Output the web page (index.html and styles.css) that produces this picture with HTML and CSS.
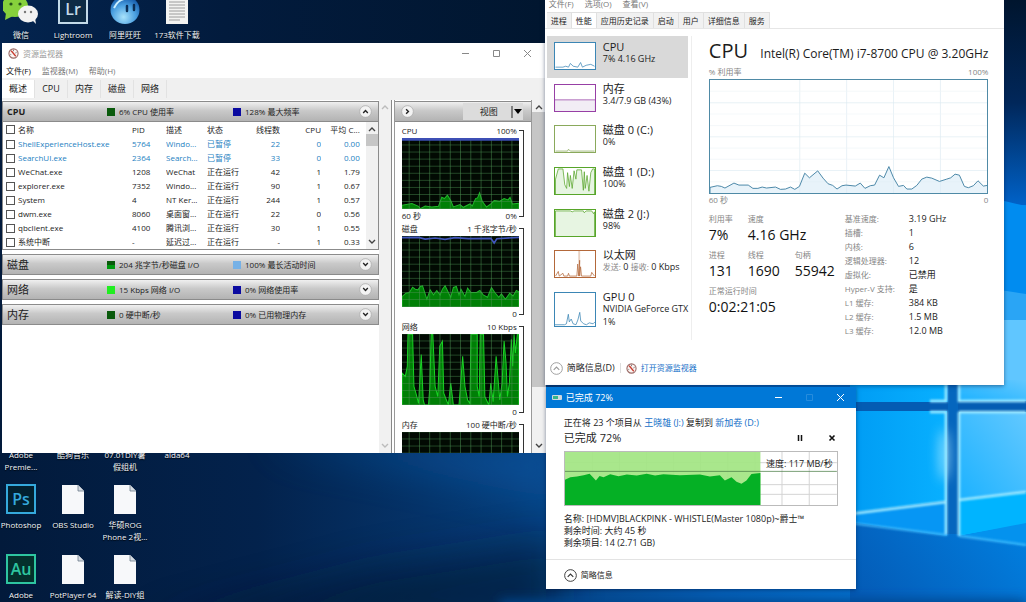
FILE: index.html
```html
<!DOCTYPE html>
<html lang="zh-CN">
<head>
<meta charset="utf-8">
<title>桌面</title>
<link rel="stylesheet" href="styles.css">
</head>
<body>
<main class="desktop">
<svg class="wallpaper" viewBox="0 0 1026 602" preserveAspectRatio="none" aria-hidden="true">
  <defs>
    <linearGradient id="night" x1="0" y1="0" x2="1" y2="0"><stop offset="0" stop-color="#021a3b"/><stop offset=".25" stop-color="#03224c"/><stop offset=".5" stop-color="#063c78"/><stop offset=".7" stop-color="#0560b8"/><stop offset="1" stop-color="#0287ee"/></linearGradient>
    <linearGradient id="sky" x1="0" y1="0" x2="0" y2="1"><stop offset="0" stop-color="#00152e"/><stop offset=".5" stop-color="#01275a"/><stop offset="1" stop-color="#0062c8"/></linearGradient>
    <linearGradient id="pane" x1="0" y1="0" x2="1" y2="0"><stop offset="0" stop-color="#009cf4"/><stop offset="1" stop-color="#08b0ff"/></linearGradient>
    <linearGradient id="pane2" x1="0" y1="1" x2="1" y2="0"><stop offset="0" stop-color="#1cb2ff"/><stop offset="1" stop-color="#62c8ff"/></linearGradient>
    <linearGradient id="floor" x1="0" y1="1" x2="1" y2="0"><stop offset="0" stop-color="#0459b4"/><stop offset="1" stop-color="#0092f5"/></linearGradient>
    <linearGradient id="top" x1="0" y1="0" x2="1" y2="0"><stop offset="0" stop-color="#03244f"/><stop offset=".4" stop-color="#021b3d"/><stop offset="1" stop-color="#01162f"/></linearGradient>
    <filter id="soft" filterUnits="userSpaceOnUse" x="840" y="370" width="200" height="240"><feGaussianBlur stdDeviation=".8"/></filter>
    <filter id="glow" filterUnits="userSpaceOnUse" x="0" y="300" width="1026" height="400"><feGaussianBlur stdDeviation="6"/></filter>
    <filter id="haze" filterUnits="userSpaceOnUse" x="0" y="300" width="1026" height="400"><feGaussianBlur stdDeviation="20"/></filter>
  </defs>
  <rect width="1026" height="602" fill="url(#night)"/>
  <rect width="560" height="50" fill="url(#top)"/>
  <path d="M140 630L370 570L560 540V630Z" fill="#01132d" opacity=".6" filter="url(#haze)"/>
  <path d="M260 440H560V500Z" fill="#0a62b4" opacity=".45" filter="url(#haze)"/>
  <rect x="1000" width="26" height="205" fill="url(#sky)"/>
  <path d="M1000 200L1026 206V300L1000 292Z" fill="#008cf0"/>
  <path d="M1000 290L1026 294V325H1000Z" fill="#2aa5f5"/>
  <path d="M1000 320H1026V386H1000Z" fill="#60c6ff"/>
  <rect x="850" y="380" width="176" height="222" fill="url(#floor)"/>
  <path d="M500 600H1026V620H500Z" fill="#03448c" filter="url(#glow)"/>
  <path d="M850 380H947V402H850Z" fill="url(#pane)"/>
  <path d="M850 411H947V501L850 513Z" fill="url(#pane)"/>
  <path d="M850 513L947 501V536L850 522Z" fill="#0696f4"/>
  <path d="M959 380H1026V401H959Z" fill="url(#pane2)"/>
  <path d="M959 412H1026V492L959 500Z" fill="url(#pane2)"/>
  <path d="M959 500L1026 492V524L959 536Z" fill="#00b4ff"/>
  <path d="M959 536L1026 523V546Z" fill="#0492ee"/>
  <path d="M850 402H947L954 401H1026V412H959V534H947V411H850Z" fill="#045cb3"/>
  <rect x="948" y="380" width="10" height="154" fill="#0566be"/>
  <ellipse cx="944" cy="455" rx="5" ry="26" fill="#b5ecff" opacity=".7" filter="url(#glow)"/>
  <g fill="none" stroke="#a4ecff" stroke-width="2.500" filter="url(#soft)">
    <path d="M946 380V401H930M946 535V412H930M959 380V401H1026M959 412V536M959 412H1026"/>
    <path d="M850 514L946 502M959 500L1026 492"/>
    <path d="M850 523L947 535M959 536L1026 545" stroke="#3fb9fa" stroke-width="2"/>
  </g>
</svg>

<svg class="defs" aria-hidden="true">
  <defs>
    <pattern id="grid" width="31" height="21" patternUnits="userSpaceOnUse" x="42" y="293"><path d="M31 0V21M0 21H31" stroke="#4a8f50" stroke-width="3" fill="none"/></pattern>
    <symbol id="gauge" viewBox="0 0 12 12"><circle cx="6" cy="6" r="5" fill="#fbf4f2" stroke="#9a6a66" stroke-width="1.200"/><path d="M3.500 3L8.500 9" stroke="#c7392c" stroke-width="1.400"/><path d="M6 2V3.500M9.500 4.500L8 5.500M2.500 7H3.500" stroke="#555" stroke-width=".8"/></symbol>
    <symbol id="page" viewBox="0 0 22 29"><path d="M0 0H16L22 6V29H0Z" fill="#f7f8fa"/><path d="M16 0V6H22" fill="#d5dbe2" stroke="#6c7b8c" stroke-width=".8"/></symbol>
    <symbol id="up" viewBox="0 0 14 14"><circle cx="7" cy="7" r="6.300" fill="none" stroke="currentColor"/><path d="M4 8.500L7 5.500L10 8.500" fill="none" stroke="currentColor" stroke-width="1.200"/></symbol>
    <symbol id="rup" viewBox="0 0 14 14"><circle cx="7" cy="7" r="6.300" fill="#f3f3f3" stroke="#aaa" stroke-width=".8"/><path d="M4.500 8.500L7 6L9.500 8.500" fill="none" stroke="#222" stroke-width="1.500"/></symbol>
    <symbol id="chev" viewBox="0 0 8 6"><path d="M1 5L4 2L7 5" fill="none" stroke="#444" stroke-width="1.400"/></symbol>
  </defs>
</svg>

<section class="icons" aria-label="桌面图标">
  <a class="icon r1 c1" href="#"><svg class="pic wide" viewBox="0 0 36 30"><ellipse cx="12" cy="12" rx="13" ry="11" fill="#86d13c"/><path d="M3 19L2 26L10 22Z" fill="#86d13c"/><circle cx="8" cy="10" r="1.600" fill="#26541a"/><circle cx="17" cy="10" r="1.600" fill="#26541a"/><ellipse cx="25" cy="20" rx="10" ry="8.500" fill="#f2f2f2"/><path d="M29 26L33 30L32 24Z" fill="#f2f2f2"/><circle cx="22" cy="18" r="1.200" fill="#777"/><circle cx="28" cy="18" r="1.200" fill="#777"/></svg><span>微信</span></a>
  <a class="icon r1 c2" href="#"><span class="pic tile lr">Lr</span><span>Lightroom</span></a>
  <a class="icon r1 c3" href="#"><svg class="pic" viewBox="0 0 30 30"><defs><radialGradient id="ball" cx=".45" cy=".75" r=".7"><stop offset="0" stop-color="#a8e2fb"/><stop offset=".6" stop-color="#4a9fe0"/><stop offset="1" stop-color="#195fae"/></radialGradient></defs><ellipse cx="15" cy="16" rx="14.500" ry="14" fill="url(#ball)"/><path d="M17 12V17M24 11V16" stroke="#0b2d55" stroke-width="2.500" stroke-linecap="round"/><path d="M4 14Q8 6 14 5" stroke="#c9eeff" stroke-width="2" fill="none"/></svg><span>阿里旺旺</span></a>
  <a class="icon r1 c4" href="#"><svg class="pic doc" viewBox="0 0 22 29"><path d="M0 0H22V29H0Z" fill="#f3f3f1"/><path d="M3 7H19M3 10H19M3 13H19M3 16H19M3 19H19M3 22H19M3 25H14" stroke="#9c9c9c"/></svg><span>173软件下载</span></a>
  <a class="icon r2 c1" href="#"><span class="pic"></span><span>Adobe<br>Premie...</span></a>
  <a class="icon r2 c2" href="#"><span class="pic"></span><span>酷狗音乐</span></a>
  <a class="icon r2 c3" href="#"><span class="pic"></span><span>07.01DIY暑<br>假组机</span></a>
  <a class="icon r2 c4" href="#"><span class="pic"></span><span>aida64</span></a>
  <a class="icon r3 c1" href="#"><span class="pic tile ps">Ps</span><span>Photoshop</span></a>
  <a class="icon r3 c2" href="#"><svg class="pic doc"><use href="#page"/></svg><span>OBS Studio</span></a>
  <a class="icon r3 c3" href="#"><svg class="pic doc"><use href="#page"/></svg><span>华硕ROG<br>Phone 2视...</span></a>
  <a class="icon r4 c1" href="#"><span class="pic tile au">Au</span><span>Adobe</span></a>
  <a class="icon r4 c2" href="#"><svg class="pic doc"><use href="#page"/></svg><span>PotPlayer 64</span></a>
  <a class="icon r4 c3" href="#"><svg class="pic doc"><use href="#page"/></svg><span>解读-DIY组</span></a>
</section>

<section class="win resmon" aria-label="资源监视器">
  <header class="titlebar">
    <svg class="gauge"><use href="#gauge"/></svg><h1>资源监视器</h1>
    <div class="winbtns">
      <button aria-label="最小化"><svg viewBox="0 0 9 9"><path d="M1 4.500H8"/></svg></button>
      <button aria-label="最大化"><svg viewBox="0 0 9 9"><path d="M1.500 1.500H7.500V7.500H1.500Z"/></svg></button>
      <button aria-label="关闭"><svg viewBox="0 0 9 9"><path d="M1 1L8 8M8 1L1 8"/></svg></button>
    </div>
  </header>
  <nav class="menubar"><button class="on">文件(F)</button><button>监视器(M)</button><button>帮助(H)</button></nav>
  <nav class="rtabs"><button class="on">概述</button><button>CPU</button><button>内存</button><button>磁盘</button><button>网络</button></nav>
  <div class="rbody">
    <div class="sections">
      <section class="group">
        <header class="bar"><h2 class="bold">CPU</h2><span class="m1"><i class="sq dg"></i>6% CPU 使用率</span><span class="m2"><i class="sq db"></i>128% 最大频率</span><button class="round" aria-label="收起"><svg><use href="#rup"/></svg></button></header>
        <div class="tablebox">
          <table>
            <colgroup><col class="k0"><col class="k1"><col class="k2"><col class="k3"><col class="k4"><col class="k5"><col class="k6"></colgroup>
            <thead><tr><th><label><input type="checkbox">名称</label></th><th>PID</th><th>描述</th><th>状态</th><th class="n">线程数</th><th class="n">CPU</th><th class="n">平均 C...</th></tr></thead>
            <tbody>
            <tr class="paused"><td><label><input type="checkbox">ShellExperienceHost.exe</label></td><td>5764</td><td>Windo...</td><td>已暂停</td><td class="n">22</td><td class="n">0</td><td class="n">0.00</td></tr>
            <tr class="paused"><td><label><input type="checkbox">SearchUI.exe</label></td><td>2364</td><td>Search...</td><td>已暂停</td><td class="n">33</td><td class="n">0</td><td class="n">0.00</td></tr>
            <tr><td><label><input type="checkbox">WeChat.exe</label></td><td>1208</td><td>WeChat</td><td>正在运行</td><td class="n">42</td><td class="n">1</td><td class="n">1.79</td></tr>
            <tr><td><label><input type="checkbox">explorer.exe</label></td><td>7352</td><td>Windo...</td><td>正在运行</td><td class="n">90</td><td class="n">1</td><td class="n">0.67</td></tr>
            <tr><td><label><input type="checkbox">System</label></td><td>4</td><td>NT Ker...</td><td>正在运行</td><td class="n">244</td><td class="n">1</td><td class="n">0.57</td></tr>
            <tr><td><label><input type="checkbox">dwm.exe</label></td><td>8060</td><td>桌面窗...</td><td>正在运行</td><td class="n">22</td><td class="n">0</td><td class="n">0.56</td></tr>
            <tr><td><label><input type="checkbox">qbclient.exe</label></td><td>4100</td><td>腾讯浏...</td><td>正在运行</td><td class="n">30</td><td class="n">1</td><td class="n">0.55</td></tr>
            <tr><td><label><input type="checkbox">系统中断</label></td><td>-</td><td>延迟过...</td><td>正在运行</td><td class="n">-</td><td class="n">1</td><td class="n">0.33</td></tr>
            </tbody>
          </table>
          <div class="scroll inner"><svg><use href="#chev"/></svg><i class="thumb"></i><svg class="down"><use href="#chev"/></svg></div>
        </div>
      </section>
      <header class="bar"><h2>磁盘</h2><span class="m1"><i class="sq dg2"></i>204 兆字节/秒磁盘 I/O</span><span class="m2"><i class="sq lb"></i>100% 最长活动时间</span><button class="round" aria-label="展开"><svg class="down"><use href="#rup"/></svg></button></header>
      <header class="bar"><h2>网络</h2><span class="m1"><i class="sq lg"></i>15 Kbps 网络 I/O</span><span class="m2"><i class="sq db"></i>0% 网络使用率</span><button class="round" aria-label="展开"><svg class="down"><use href="#rup"/></svg></button></header>
      <header class="bar"><h2>内存</h2><span class="m1"><i class="sq dg"></i>0 硬中断/秒</span><span class="m2"><i class="sq db"></i>0% 已用物理内存</span><button class="round" aria-label="展开"><svg class="down"><use href="#rup"/></svg></button></header>
    </div>
    <div class="scroll idle"><svg><use href="#chev"/></svg><svg class="down"><use href="#chev"/></svg></div>
    <aside class="graphs">
      <header class="bar"><button class="round" aria-label="隐藏"><svg class="side"><use href="#rup"/></svg></button><button class="view"><span>视图</span><svg viewBox="0 0 12 12"><path d="M1 0V12" stroke="#222"/><path d="M3 3H11L7 8Z" fill="#000"/></svg></button></header>
      <figure><div class="cap"><span>CPU</span><span>100%</span></div>
        <svg class="plot" viewBox="50 292 353 211" preserveAspectRatio="none"><rect x="50" y="292" width="353" height="211" fill="#020a03"/><path fill="#007f06" stroke="#21b62b" stroke-width="3" d="M50 505V492L80 487L100 495L105 502L120 494L140 497L160 495L170 468L178 472L187 462L197 478L205 497L225 490L235 498L255 488L262 494L272 472L278 470L284 455L292 480L305 497L318 488L328 478L345 480L358 472L370 476L376 468L383 488L403 486V505Z"/><rect x="50" y="292" width="353" height="211" fill="url(#grid)"/><path d="M50 296H403" stroke="#3d4fb5" stroke-width="8"/></svg>
        <div class="cap foot"><span>60 秒</span><span>0%</span></div></figure>
      <figure><div class="cap"><span>磁盘</span><span>1 千兆字节/秒</span></div>
        <svg class="plot" viewBox="50 292 353 211" preserveAspectRatio="none"><rect x="50" y="292" width="353" height="211" fill="#020a03"/><path transform="translate(0 302)" fill="#007f06" stroke="#21b62b" stroke-width="3" d="M50 203V170L62 160L72 158L82 142L90 148L98 150L105 140L112 138L125 178L135 150L145 165L155 152L165 165L172 148L180 138L190 158L197 172L205 143L214 140L222 165L228 148L240 170L248 145L258 158L275 158L285 152L295 165L308 172L320 143L330 158L342 172L350 162L362 178L375 160L385 168L395 152L403 156V203Z"/><rect x="50" y="292" width="353" height="211" fill="url(#grid)"/><path d="M50 297L100 296L120 301L150 298L180 302L210 297L250 300L318 299L328 313L336 300L403 296" fill="none" stroke="#4257bd" stroke-width="5"/></svg>
        <div class="cap foot"><span></span><span>0</span></div></figure>
      <figure><div class="cap"><span>网络</span><span>10 Kbps</span></div>
        <svg class="plot" viewBox="50 292 353 211" preserveAspectRatio="none"><rect x="50" y="292" width="353" height="211" fill="#020a03"/><path transform="translate(0 8)" fill="#007f06" stroke="#18d524" stroke-width="3" d="M50 500V400L60 410L66 380L68 285H82L86 440L92 460L100 490L108 345L114 480L118 495H130L134 440L138 285H143L150 440L158 470L164 320L172 305L176 460L184 480L190 495L197 430L205 495H222L233 350L240 440L248 480L255 490L258 285H277V440L283 470L286 285H296L300 470L312 495L318 430L325 485L334 350L340 420L345 480L352 430L358 305L364 370L368 470L374 430L380 300L384 380L388 285L392 340L398 285H403V500Z"/><rect x="50" y="292" width="353" height="211" fill="url(#grid)"/></svg>
        <div class="cap foot"><span></span><span>0</span></div></figure>
      <figure><div class="cap"><span>内存</span><span>100 硬中断/秒</span></div>
        <svg class="plot" viewBox="50 292 353 211" preserveAspectRatio="none"><rect x="50" y="292" width="353" height="211" fill="#020a03"/><rect x="50" y="292" width="353" height="211" fill="url(#grid)"/></svg></figure>
    </aside>
    <div class="scroll outer"><svg><use href="#chev"/></svg><i class="thumb"></i><svg class="down"><use href="#chev"/></svg></div>
  </div>
</section>

<section class="win taskmgr" aria-label="任务管理器">
  <nav class="menubar"><button>文件(F)</button><button>选项(O)</button><button>查看(V)</button></nav>
  <nav class="ttabs"><button>进程</button><button class="on">性能</button><button>应用历史记录</button><button>启动</button><button>用户</button><button>详细信息</button><button>服务</button></nav>
  <div class="tbody">
    <ul class="devices">
      <li class="on"><svg class="mini blue" viewBox="0 0 42 28"><path d="M0 26L8 26L11 25L14 26L16 22L19 25L24 26L27 21L29 26L33 24L38 23L42 25"/></svg><div><b>CPU</b><span>7% 4.16 GHz</span></div></li>
      <li><svg class="mini purple" viewBox="0 0 42 28"><path d="M-1 16H43V30H-1Z"/></svg><div><b>内存</b><span>3.4/7.9 GB (43%)</span></div></li>
      <li><svg class="mini olive" viewBox="0 0 42 28"><path d="M0 27H13L14 25L16 27H42"/></svg><div><b>磁盘 0 (C:)</b><span>0%</span></div></li>
      <li><svg class="mini green" viewBox="0 0 42 28"><path d="M0 30V12L3 1H8L10 18L12 22L13 5L15 20L16 8L18 22L20 3L22 12L23 2H28L30 24L31 4L32 22L34 8L36 25L38 5L40 1H42V30Z"/></svg><div><b>磁盘 1 (D:)</b><span>100%</span></div></li>
      <li><svg class="mini green" viewBox="0 0 42 28"><path d="M0 30V1H16L18 2L20 1H30L31 3L33 1H39L41 4L42 2V30Z"/></svg><div><b>磁盘 2 (J:)</b><span>98%</span></div></li>
      <li><svg class="mini brown" viewBox="0 0 42 28"><path d="M25 0V14M26 0V14" stroke-opacity=".4"/><path d="M0 27L3 22L4 27L8 24L9 27H13L14 24L15 27H23L24 14L25 27L26 10V27L27 17L28 27H38L39 23L42 27"/></svg><div><b>以太网</b><span><em>发送:</em> 0 <em>接收:</em> 0 Kbps</span></div></li>
      <li class="gpu"><svg class="mini blue" viewBox="0 0 42 34"><path d="M0 33H10L12 32L14 22L15 30L17 27L19 32L22 33L24 28L26 20L27 29L30 32L33 33L36 31L40 32L42 30"/></svg><div><b>GPU 0</b><span>NVIDIA GeForce GTX</span><span>1%</span></div></li>
    </ul>
    <div class="perf">
      <header><h2>CPU</h2><span>Intel(R) Core(TM) i7-8700 CPU @ 3.20GHz</span></header>
      <div class="axis"><span>% 利用率</span><span>100%</span></div>
      <svg class="usage" viewBox="28 148 835 342" preserveAspectRatio="none"><g stroke="#dceaf2" stroke-width="2"><path d="M298 148V490M439 148V490M580 148V490M721 148V490M28 217H863M28 320H863M28 422H863"/><path stroke="#eff5f8" d="M28 182H863M28 251H863M28 286H863M28 354H863M28 388H863M28 456H863"/></g><path class="area" d="M28 495V473L50 468L62 470L73 475L100 460L115 466L143 466L157 476L172 476L185 472L198 475L225 472L240 479L255 478L270 472L283 479L297 470L313 430L327 444L352 423L368 445L383 462L397 467L410 478L425 468L437 466L465 469L480 460L494 476L510 468L523 466L538 436L551 444L566 410L580 444L595 470L610 467L620 478L635 478L650 467L665 448L680 442L695 445L718 455L740 448L752 444L765 433L778 436L793 470L805 474L820 468L834 453L850 469L863 467V495Z"/></svg>
      <div class="axis"><span>60 秒</span><span>0</span></div>
      <div class="stats">
        <div class="big">
          <dl><div><dt>利用率</dt><dd>7%</dd></div><div><dt>速度</dt><dd>4.16 GHz</dd></div></dl>
          <dl><div><dt>进程</dt><dd>131</dd></div><div><dt>线程</dt><dd>1690</dd></div><div><dt>句柄</dt><dd>55942</dd></div></dl>
          <dl><div><dt>正常运行时间</dt><dd>0:02:21:05</dd></div></dl>
        </div>
        <dl class="small"><dt>基准速度:</dt><dd>3.19 GHz</dd><dt>插槽:</dt><dd>1</dd><dt>内核:</dt><dd>6</dd><dt>逻辑处理器:</dt><dd>12</dd><dt>虚拟化:</dt><dd>已禁用</dd><dt>Hyper-V 支持:</dt><dd>是</dd><dt>L1 缓存:</dt><dd>384 KB</dd><dt>L2 缓存:</dt><dd>1.5 MB</dd><dt>L3 缓存:</dt><dd>12.0 MB</dd></dl>
      </div>
    </div>
  </div>
  <footer><button><svg class="ring gray"><use href="#up"/></svg>简略信息(D)</button><i class="sep"></i><a href="#"><svg class="gauge"><use href="#gauge"/></svg>打开资源监视器</a></footer>
</section>

<section class="win copy" aria-label="文件复制">
  <header class="titlebar">
    <svg class="drive" viewBox="0 0 10 7"><rect y="1" width="10" height="5" rx="1" fill="#cfd8df"/><rect x="1" y="2" width="5" height="3" fill="#35b58b"/></svg><h1>已完成 72%</h1>
    <div class="winbtns">
      <button aria-label="最小化"><svg viewBox="0 0 9 9"><path d="M1 4.500H8"/></svg></button>
      <button class="off" aria-label="最大化" disabled><svg viewBox="0 0 9 9"><path d="M1.500 1.500H7.500V7.500H1.500Z"/></svg></button>
      <button aria-label="关闭"><svg viewBox="0 0 9 9"><path d="M1 1L8 8M8 1L1 8"/></svg></button>
    </div>
  </header>
  <div class="cbody">
    <p>正在将 23 个项目从 <a href="#">王晓雄 (J:)</a> 复制到 <a href="#">新加卷 (D:)</a></p>
    <div class="prog"><h2>已完成 72%</h2><button aria-label="暂停"><svg viewBox="0 0 8 8"><path d="M2.500 1V7M5.500 1V7" stroke="#111" stroke-width="1.500"/></svg></button><button aria-label="取消"><svg viewBox="0 0 8 8"><path d="M1.500 1.500L6.500 6.500M6.500 1.500L1.500 6.500" stroke="#111" stroke-width="1.600"/></svg></button></div>
    <div class="speed">
      <svg viewBox="74 212 818 164" preserveAspectRatio="none"><path d="M156 212V376M238 212V376M319 212V376M401 212V376M482 212V376M564 212V376M646 212V376M727 212V376M809 212V376M74 245H892M74 313H892M74 343H892" stroke="#d3d3d3" stroke-width="3" fill="none"/><rect x="74" y="212" width="588" height="164" fill="#a3e583" opacity=".93"/><path fill="#05b025" d="M74 376V298L90 290L110 288L130 284L148 279L158 290L167 300L178 286L190 290L210 281L235 287L260 282L290 285L320 279L345 285L370 281L420 284L480 282L510 288L540 284L555 300L575 290L590 304L605 310L620 300L635 280L662 277V376Z"/><path d="M74 272H892" stroke="#497b45" stroke-width="3" opacity=".75"/></svg>
      <span>速度: 117 MB/秒</span>
    </div>
    <p>名称: [HDMV]BLACKPINK - WHISTLE(Master 1080p)~爵士™</p>
    <p>剩余时间: 大约 45 秒</p>
    <p>剩余项目: 14 (2.71 GB)</p>
  </div>
  <footer><button><svg class="ring"><use href="#up"/></svg>简略信息</button></footer>
</section>
</main>
</body>
</html>
```
FILE: styles.css
```css
* { box-sizing: border-box; }
html, body { height: 100%; }
body { margin: 0; overflow: hidden; font: 8px/14px "Open Sans", "Noto Sans CJK SC", sans-serif; color: #1c1c1c; }
h1, h2, p, ul, dl, dd, figure { margin: 0; padding: 0; }
h1, h2 { font-weight: 400; }
button { appearance: none; border: 0; padding: 0; background: none; font: inherit; color: inherit; }
a { color: #1570c8; text-decoration: none; }
svg { display: block; flex: none; }
.defs { position: absolute; width: 0; height: 0; }
.desktop { position: relative; height: 100%; min-height: 602px; overflow: hidden; }
.wallpaper { position: absolute; inset: 0; width: 100%; height: 100%; }

.icons { position: absolute; left: -5px; top: -6px; display: grid; grid-template-columns: repeat(4, 52px); grid-template-rows: repeat(9, 70px); }
.icon { display: flex; flex-direction: column; align-items: center; gap: 5px; color: #f2f5f8; font-size: 8px; line-height: 12px; text-align: center; white-space: nowrap; text-shadow: 0 1px 1px #000; }
.pic { width: 30px; height: 30px; }
.wide { width: 36px; }
.doc { width: 22px; margin-top: 1px; height: 29px; }
.tile { border: 2px solid; font: 600 16px/26px "Open Sans", sans-serif; text-shadow: none; }
.lr { color: #c3dae8; background: #0d2b45; }
.ps { color: #35a9dc; background: #02202f; }
.au { color: #2ec5a0; background: #04302c; }
.r1 { grid-row: 1; } .r2 { grid-row: 7; } .r3 { grid-row: 8; } .r4 { grid-row: 9; }
.c1 { grid-column: 1; } .c2 { grid-column: 2; } .c3 { grid-column: 3; } .c4 { grid-column: 4; }

.win { position: absolute; display: flex; flex-direction: column; background: #fff; white-space: nowrap; }
.titlebar { display: flex; align-items: center; gap: 4px; height: 21px; padding-left: 6px; }
.titlebar h1 { font-size: 8px; }
.winbtns { display: flex; margin-left: auto; }
.winbtns button { width: 31px; height: 21px; display: grid; place-items: center; }
.winbtns svg { width: 9px; height: 9px; fill: none; stroke: currentColor; }
.gauge { width: 11px; height: 11px; }
.menubar { display: flex; gap: 11px; padding-left: 4px; height: 14px; color: #777; }
.menubar .on { color: #111; }
.down { transform: rotate(180deg); }
.side { transform: rotate(90deg); }

.resmon { left: 2px; width: 53%; top: 43px; bottom: 149px; }
.resmon h1 { color: #999; }
.resmon .winbtns { color: #888; padding-right: 3px; }
.rtabs { display: flex; height: 20px; background: #f0f0f0; padding-top: 2px; }
.rtabs button { width: 33px; border-right: 1px solid #e2e2e2; font-size: 9px; }
.rtabs .on { background: #fff; }
.rbody { flex: 1; min-height: 0; display: flex; border-top: 2px solid #f0f0f0; }
.sections { flex: 1; min-width: 0; display: flex; flex-direction: column; gap: 4px; padding-top: 1px; }
.bar { display: flex; align-items: center; height: 21px; padding: 0 6px 0 4px; border: 1px solid #8b8b8b; background: linear-gradient(#f0f0f0, #c9c9c9 45%, #b3b3b3); }
.bar h2 { width: 100px; font-size: 11px; }
.bar .bold { font-size: 9px; font-weight: 700; }
.m1, .m2 { display: flex; align-items: center; gap: 4px; }
.m1 { width: 126px; }
.sq { width: 8px; height: 8px; }
.dg { background: #0a5a0c; } .dg2 { background: linear-gradient(#0a5a0c 50%, #009a10 50%); } .lg { background: #20ee20; } .db { background: #0a0aa0; } .lb { background: #76b1e6; }
.round { width: 13px; height: 13px; margin-left: auto; }
.round svg { width: 13px; height: 13px; }
.tablebox { display: flex; border: 1px solid #8b8b8b; border-top: 0; }
table { flex: 1; min-width: 0; table-layout: fixed; border-collapse: collapse; }
.k0 { width: 129px; } .k1 { width: 34px; } .k2 { width: 41px; } .k3 { width: 42px; } .k4 { width: 31px; } .k5 { width: 41px; }
th, td { height: 14px; padding: 0; font-weight: 400; text-align: left; overflow: hidden; }
thead th { height: 15px; }
.n { text-align: right; }
th:last-child, td:last-child { padding-right: 6px; }
.paused { color: #2581c2; }
label { display: flex; align-items: center; gap: 3px; padding-left: 3px; }
label input { appearance: none; width: 9px; height: 9px; margin: 0; border: 1px solid #555; background: #fff; }
.scroll { display: flex; flex-direction: column; align-items: center; width: 12px; background: #f1f1f1; padding: 4px 0; }
.scroll svg { width: 8px; height: 6px; }
.scroll .down { margin-top: auto; }
.thumb { width: 100%; background: #c6c6c6; margin-top: 2px; }
.inner .thumb { height: 12px; }
.idle { width: 13px; border-right: 1px solid #888; }
.idle svg { opacity: .3; }
.outer { width: 14px; }
.outer .thumb { height: 275px; }
.graphs { width: 138px; margin-left: 2px; padding-top: 1px; border-left: 1px solid #999; border-right: 1px solid #999; overflow: hidden; }
.graphs .bar { padding: 0 8px 0 6px; border-left: 0; border-right: 0; margin-bottom: 2px; }
.graphs .round { margin: 0; }
.view { display: flex; align-items: center; width: 60px; height: 17px; margin-left: auto; background: #dcdcdc; }
.view span { flex: 1; padding-left: 4px; font-size: 9px; }
.view svg { width: 12px; height: 12px; }
figure { position: relative; padding: 0 12px 0 7px; }
figure::after { content: ""; position: absolute; right: 7px; top: 6px; bottom: 5px; width: 4px; border: 1px solid #333; border-left: 0; }
.cap { display: flex; justify-content: space-between; height: 14px; padding-right: 2px; font-size: 8px; }
.foot { height: 13px; line-height: 13px; }
.plot { width: 100%; height: 71px; }

.taskmgr { left: 53.1%; width: 44.8%; top: -4px; box-shadow: 0 1px 4px rgba(0, 20, 60, .5); }
.taskmgr .menubar { height: 16px; }
.ttabs { display: flex; height: 17px; padding-left: 2px; border-bottom: 1px solid #e6e6e6; }
.ttabs button { padding: 0 4px; background: #f1f1f1; border: 1px solid #e0e0e0; border-left: 0; border-bottom: 0; }
.ttabs .on { background: #fff; }
.tbody { display: flex; height: 322px; padding: 7px 16px 0 2px; }
.devices { list-style: none; width: 145px; height: 304px; display: flex; flex-direction: column; border-right: 1px solid #eee; }
.devices li { flex: 1; display: flex; gap: 7px; padding: 6px 0 0 7px; margin-right: 3px; }
.devices .gpu { flex: 0 0 54px; }
.devices .on { background: #d9d9d9; }
.devices div { display: flex; flex-direction: column; }
.devices b { font-weight: 400; font-size: 11px; line-height: 10px; }
.devices span { font-size: 9px; line-height: 13px; }
.devices em { font-style: normal; font-size: 8px; color: #888; }
.mini { width: 42px; height: 28px; border: 1px solid; background: #fff; }
.mini path { stroke: currentColor; fill: none; stroke-width: .8; }
.gpu .mini { height: 35px; }
.blue { color: #3b86b5; } .purple { color: #973fa5; } .olive { color: #8aa95b; } .green { color: #57a529; } .brown { color: #b3683a; }
.purple path { fill: #f2edf5; } .green path { fill: #e7f5e2; }
.perf { flex: 1; min-width: 0; padding-left: 17px; }
.perf header { display: flex; justify-content: space-between; align-items: center; height: 30px; }
.perf h2 { font-size: 20px; line-height: 30px; }
.perf header span { font-size: 12px; padding-top: 5px; }
.axis { display: flex; justify-content: space-between; color: #858585; height: 13px; line-height: 12px; }
.usage { width: 100%; height: 115px; border: 1px solid #4f8aa6; }
.area { fill: #d8ebf7; fill-opacity: .6; stroke: #4c88a8; stroke-width: 3; }
.stats { display: flex; padding-top: 5px; }
.big { width: 136px; display: flex; flex-direction: column; }
.big dl { display: flex; gap: 15px; height: 36px; }
dt { color: #858585; }
.big dd { font-size: 14px; line-height: 18px; color: #111; }
.small { flex: 1; display: grid; grid-template-columns: 64px 1fr; }
.small dd { font-size: 9px; }
.taskmgr footer { display: flex; align-items: center; height: 34px; padding-left: 5px; }
.taskmgr footer button { font-size: 9px; }
footer button, footer a { display: flex; align-items: center; gap: 4px; }
.sep { width: 1px; height: 10px; background: #ddd; margin: 0 5px; }
.ring { width: 13px; height: 13px; color: #333; }
.gray { color: #999; }

.copy { left: 53.2%; width: 30.2%; top: 387px; font-size: 9px; box-shadow: 0 1px 4px rgba(0, 20, 60, .5); }
.copy .titlebar { background: #0078d7; color: #fff; }
.copy h1 { font-size: 9px; }
.drive { width: 10px; height: 7px; }
.off { opacity: .15; }
.cbody { padding: 9px 18px 10px; }
.cbody p { line-height: 12px; }
.prog { display: flex; align-items: center; gap: 24px; height: 17px; margin-bottom: 5px; }
.prog h2 { font-size: 11px; margin-right: auto; }
.prog button:last-child { margin-right: 2px; }
.prog svg { width: 8px; height: 8px; }
.speed { display: grid; border: 1px solid #bbb; height: 55px; margin-bottom: 7px; }
.speed svg, .speed span { grid-area: 1 / 1; }
.speed svg { width: 100%; height: 53px; }
.speed span { justify-self: end; padding: 5px 4px 0 0; z-index: 1; }
.copy footer { border-top: 1px solid #e3e3e3; padding: 8px 18px 7px; }
.copy footer button { font-size: 8px; }
```
